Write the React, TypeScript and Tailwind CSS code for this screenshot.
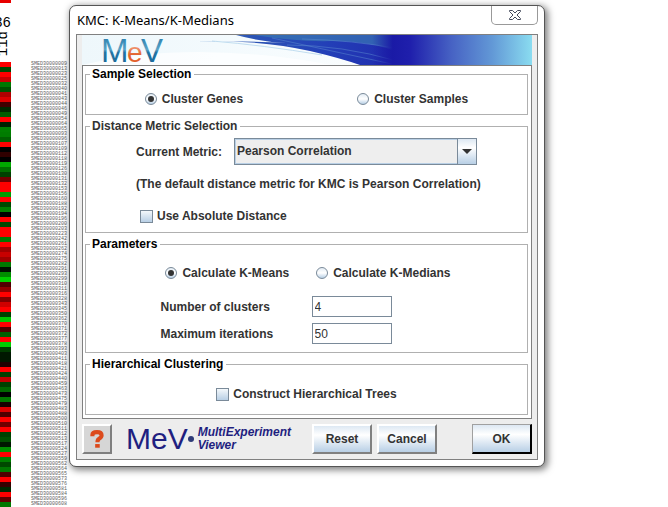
import { useState, type ReactNode } from "react";

type Spot = [id: string, color: string];

const spots: Spot[] = [
  ["009", "#ff0000"], ["013", "#004800"], ["023", "#ff0000"], ["025", "#c80000"],
  ["032", "#007800"], ["040", "#005000"], ["041", "#b00000"], ["043", "#dc0000"],
  ["044", "#400000"], ["046", "#002800"], ["049", "#005c00"], ["054", "#ff0000"],
  ["064", "#002000"], ["065", "#008000"], ["093", "#007c00"], ["096", "#006000"],
  ["107", "#ff0000"], ["109", "#000000"], ["112", "#300000"], ["118", "#000000"],
  ["119", "#00a800"], ["126", "#007000"], ["130", "#004000"], ["131", "#700000"],
  ["132", "#ff0000"], ["153", "#ff0000"], ["156", "#009c00"], ["160", "#ff0000"],
  ["188", "#004800"], ["192", "#008000"], ["194", "#000000"], ["196", "#ff0000"],
  ["200", "#004800"], ["203", "#ff0000"], ["223", "#ff0000"], ["242", "#007800"],
  ["261", "#ff0000"], ["262", "#a00000"], ["274", "#c80000"], ["275", "#a00000"],
  ["282", "#007800"], ["291", "#001000"], ["293", "#008c00"], ["299", "#00d000"],
  ["310", "#500000"], ["311", "#900000"], ["316", "#ff0000"], ["328", "#800000"],
  ["343", "#d00000"], ["345", "#ff0000"], ["350", "#004000"], ["362", "#00c800"],
  ["370", "#ff0000"], ["371", "#500000"], ["372", "#006000"], ["377", "#ff0000"],
  ["378", "#00cc00"], ["393", "#003c00"], ["403", "#001800"], ["411", "#001800"],
  ["418", "#200000"], ["421", "#ff0000"], ["424", "#004000"], ["440", "#c00000"],
  ["459", "#004000"], ["463", "#006800"], ["473", "#000000"], ["475", "#007800"],
  ["479", "#180000"], ["483", "#dc0000"], ["488", "#500000"], ["500", "#ff0000"],
  ["510", "#700000"], ["511", "#ff0000"], ["512", "#004000"], ["513", "#005000"],
  ["517", "#001800"], ["524", "#009000"], ["527", "#ff0000"], ["559", "#008000"],
  ["562", "#004800"], ["564", "#007800"], ["565", "#500000"], ["573", "#ff0000"],
  ["576", "#380000"], ["581", "#002800"], ["584", "#ff0000"], ["596", "#600000"],
  ["608", "#007800"],
];

function HeatMap() {
  return (
    <section
      aria-label="Expression matrix"
      className="w-[69px] shrink-0 overflow-hidden font-['Liberation_Mono',monospace] font-normal"
    >
      <div className="h-[62px] w-[11px] overflow-hidden">
        <div className="h-[3px] bg-[#e80000]" />
        <div className="mt-3 flex justify-end text-[14px] leading-4 text-black">36</div>
        <div className="ml-[-4px] flex w-[14px] rotate-180 justify-end text-[14px] leading-[14px] text-black [writing-mode:vertical-rl]">
          11d
        </div>
      </div>
      <ul>
        {spots.map(([id, color]) => (
          <li key={id} className="flex h-[5px] items-center gap-5">
            <span className="h-[5px] w-[11px] shrink-0" style={{ backgroundColor: color }} />
            <span className="text-[5px] leading-[5px] text-[#606060]">SMED30000{id}</span>
          </li>
        ))}
      </ul>
    </section>
  );
}

function Banner() {
  return (
    <svg viewBox="0 0 450 30" preserveAspectRatio="none" className="block h-[30px] w-full" role="img" aria-label="MeV">
      <defs>
        <linearGradient id="sky" x1="0" x2="1" y1="0" y2="0">
          <stop offset="0" stopColor="#eef7fb" />
          <stop offset="0.3" stopColor="#f3fafd" />
          <stop offset="0.62" stopColor="#fafdfe" />
        </linearGradient>
        <linearGradient id="swoosh" x1="110" x2="330" y1="0" y2="0" gradientUnits="userSpaceOnUse">
          <stop offset="0" stopColor="#6fa4d8" />
          <stop offset="0.25" stopColor="#2c55b4" />
          <stop offset="0.6" stopColor="#2340b8" />
          <stop offset="0.85" stopColor="#2130b0" />
          <stop offset="1" stopColor="#1a1aa6" />
        </linearGradient>
        <linearGradient id="fade" x1="290" x2="450" y1="0" y2="0" gradientUnits="userSpaceOnUse">
          <stop offset="0" stopColor="#1c1ca6" stopOpacity="0" />
          <stop offset="0.13" stopColor="#1a1aa6" />
          <stop offset="0.24" stopColor="#1f1fac" />
          <stop offset="0.5" stopColor="#4763c4" />
          <stop offset="0.75" stopColor="#6298d6" />
          <stop offset="1" stopColor="#8adcf0" />
        </linearGradient>
        <linearGradient id="letter" x1="0" x2="0" y1="2" y2="27" gradientUnits="userSpaceOnUse">
          <stop offset="0" stopColor="#2a7fae" />
          <stop offset="0.5" stopColor="#5aa3c6" />
          <stop offset="0.62" stopColor="#2273a3" />
          <stop offset="1" stopColor="#1d6c9c" />
        </linearGradient>
        <linearGradient id="ember" x1="0" x2="0" y1="10" y2="27" gradientUnits="userSpaceOnUse">
          <stop offset="0" stopColor="#f2a283" />
          <stop offset="0.6" stopColor="#e2602c" />
        </linearGradient>
      </defs>
      <rect width="450" height="30" fill="url(#sky)" />
      <path d="M0 30 Q110 4 250 30Z" fill="#ffffff" opacity="0.7" />
      <path d="M117 6 Q180 5 228 16 Q258 23 278 30 L340 30 L340 0 L154 0 Q180 7 205 8 Q160 6 117 6Z" fill="url(#swoosh)" />
      <path d="M172 0 Q215 7 250 6 Q290 6 318 18 L310 0Z" fill="#3c7cb4" opacity="0.65" />
      <path d="M205 10 Q260 10 315 26 M220 4 Q270 5 318 14 M190 3 Q250 16 310 29" fill="none" stroke="#5f8fd0" strokeWidth="0.8" opacity="0.6" />
      <path d="M130 6 Q180 10 240 20" fill="none" stroke="#a9d0ea" strokeWidth="0.7" />
      <rect x="290" width="160" height="30" fill="url(#fade)" />
      <g fontFamily="'Liberation Sans', Arial, sans-serif" fontSize="33" fontWeight="400">
        <text x="19" y="27" fill="url(#letter)">M</text>
        <text x="45" y="27" fontSize="28" fill="url(#ember)">e</text>
        <text x="59" y="27" fill="url(#letter)">V</text>
      </g>
    </svg>
  );
}

function Group({ title, muted, className, children }: { title: string; muted?: boolean; className: string; children: ReactNode }) {
  return (
    <fieldset className={`min-w-0 border border-[#b0b0b0] ${className}`}>
      <legend className={`ml-1 pr-[3px] pl-[2px] leading-[14px] ${muted ? "text-[#333333]" : "text-black"}`}>{title}</legend>
      {children}
    </fieldset>
  );
}

function Radio({ name, label, defaultChecked }: { name: string; label: string; defaultChecked?: boolean }) {
  return (
    <label className="flex items-center gap-[5px] leading-4">
      <input
        type="radio"
        name={name}
        defaultChecked={defaultChecked}
        className="flex size-3 appearance-none items-center justify-center rounded-full border border-[#7a8a99] bg-linear-to-b from-[#e4edf5] via-white to-[#b8cfe5] before:size-[6px] before:rounded-full checked:before:bg-[#333333]"
      />
      {label}
    </label>
  );
}

function Check({ label }: { label: string }) {
  return (
    <label className="flex items-center gap-1 leading-4">
      <input
        type="checkbox"
        className="size-[13px] appearance-none border border-[#7a8a99] bg-linear-to-b from-[#f4f8fb] to-[#b8cfe5] checked:bg-[#333333]"
      />
      {label}
    </label>
  );
}

function NumberRow({ id, label, value }: { id: string; label: string; value: string }) {
  return (
    <div className="flex items-center">
      <label htmlFor={id} className="w-[151px]">{label}</label>
      <input
        id={id}
        defaultValue={value}
        className="h-[21px] w-20 border border-[#7a8a99] bg-white px-[2px] text-[12px] font-normal text-[#333333] outline-none"
      />
    </div>
  );
}

const raised =
  "h-[30px] w-[60px] border-2 border-t-white border-l-white border-r-[#808080] border-b-[#808080] bg-linear-to-b from-[#dde8f3] via-white via-35% to-[#b8cfe5]";

function Footer() {
  return (
    <footer className="mt-[5px] flex items-center">
      <button
        type="button"
        aria-label="Help"
        className="flex size-[30px] items-center justify-center border-2 border-t-white border-l-white border-r-[#808080] border-b-[#808080] bg-[#d6d6d6]"
      >
        <svg viewBox="0 0 20 24" className="h-[22px] w-5" fill="none">
          <path d="M5 9 V7.500 Q5 4.500 10 4.500 Q15 4.500 15 8 Q15 10 12.500 11.500 Q10.500 12.500 10.500 15.500" stroke="#dc4a1c" strokeWidth="4.500" />
          <rect x="8" y="17.500" width="5" height="4" fill="#dc4a1c" />
        </svg>
      </button>
      <div className="ml-[14px] flex items-center text-[#1f1f80]">
        <span className="text-[30px] leading-[30px] font-normal">MeV</span>
        <span className="size-[6px] rounded-full bg-[#2f3c78]" />
        <span className="ml-1 leading-[13px] italic">
          MultiExperiment
          <br />
          Viewer
        </span>
      </div>
      <div className="ml-auto flex gap-[5px]">
        <button type="button" className={raised}>Reset</button>
        <button type="button" className={raised}>Cancel</button>
      </div>
      <button
        type="button"
        className="ml-[35px] h-[30px] w-[60px] border border-t-[#a0a0a0] border-r-2 border-b-2 border-l-[#a0a0a0] border-r-black border-b-black bg-linear-to-b from-[#dde8f3] via-white via-35% to-[#b8cfe5]"
      >
        OK
      </button>
    </footer>
  );
}

export default function App() {
  const [open, setOpen] = useState(true);

  return (
    <main className="flex min-h-screen items-start overflow-hidden bg-white font-['Liberation_Sans',Arial,sans-serif] text-[12px] font-bold text-[#333333]">
      <HeatMap />
      {open && (
        <div
          role="dialog"
          aria-labelledby="dialog-title"
          className="mt-[5px] max-w-[476px] flex-1 rounded-[7px] border border-[#555555] bg-white px-[6px] pb-[6px] shadow-[2px_2px_7px_1px_rgba(0,0,0,0.5)]"
        >
          <header className="flex h-7 items-start justify-between">
            <h1 id="dialog-title" className="pt-[5px] pl-px font-['Noto_Sans',sans-serif] text-[13px] leading-[18px] font-normal text-black">
              KMC: K-Means/K-Medians
            </h1>
            <button
              type="button"
              aria-label="Close"
              onClick={() => setOpen(false)}
              className="flex h-[19px] w-[47px] items-center justify-center rounded-b-[5px] border border-t-0 border-[#999999] bg-white"
            >
              <svg viewBox="0 0 12 10" className="h-[10px] w-3">
                <path d="M0.500 0.500 H3.500 L6 3 L8.500 0.500 H11.500 V1.500 L8 5 L11.500 8.500 V9.500 H8.500 L6 7 L3.500 9.500 H0.500 V8.500 L4 5 L0.500 1.500Z" fill="#ffffff" stroke="#454a5c" />
              </svg>
            </button>
          </header>

          <div className="border border-[#808080] bg-[#ededed] px-[5px] pb-[5px]">
            <Banner />
            <div className="flex flex-col gap-1 border border-[#808080] bg-white pt-px pr-[3px] pb-[3px] pl-[2px]">
              <Group title="Sample Selection" className="pt-[10px] pb-[7px]">
                <div className="flex justify-center gap-[114px]">
                  <Radio name="sample" label="Cluster Genes" defaultChecked />
                  <Radio name="sample" label="Cluster Samples" />
                </div>
              </Group>

              <Group title="Distance Metric Selection" muted className="pt-[5px] pb-2">
                <div className="mx-auto w-[341px]">
                  <div className="flex items-center">
                    <label htmlFor="metric" className="w-[98px] shrink-0">Current Metric:</label>
                    <div className="relative flex-1">
                      <select
                        id="metric"
                        className="block h-[27px] w-full appearance-none border border-[#7a8a99] bg-[#eeeeee] pb-[2px] pl-[2px] font-bold outline-1 -outline-offset-2 outline-[#b8cfe5]"
                      >
                        <option>Pearson Correlation</option>
                      </select>
                      <span className="pointer-events-none absolute inset-y-0 right-0 flex w-5 items-center justify-center border border-[#7a8a99] bg-linear-to-b from-[#dde8f3] via-white via-35% to-[#b8cfe5]">
                        <svg viewBox="0 0 10 5" className="h-[5px] w-[10px]">
                          <path d="M0 0H10L5 5Z" fill="#333333" />
                        </svg>
                      </span>
                    </div>
                  </div>
                  <p className="mt-[11px] leading-4 whitespace-nowrap">
                    (The default distance metric for KMC is Pearson Correlation)
                  </p>
                  <div className="mt-4 pl-1">
                    <Check label="Use Absolute Distance" />
                  </div>
                </div>
              </Group>

              <Group title="Parameters" className="pt-[14px] pb-2">
                <div className="flex justify-center gap-[27px] pl-[3px]">
                  <Radio name="method" label="Calculate K-Means" defaultChecked />
                  <Radio name="method" label="Calculate K-Medians" />
                </div>
                <div className="mx-auto mt-[15px] flex w-[292px] flex-col gap-[6px]">
                  <NumberRow id="clusters" label="Number of clusters" value="4" />
                  <NumberRow id="iterations" label="Maximum iterations" value="50" />
                </div>
              </Group>

              <Group title="Hierarchical Clustering" className="pt-[15px] pb-3">
                <div className="flex justify-center">
                  <Check label="Construct Hierarchical Trees" />
                </div>
              </Group>
            </div>
            <Footer />
          </div>
        </div>
      )}
    </main>
  );
}
